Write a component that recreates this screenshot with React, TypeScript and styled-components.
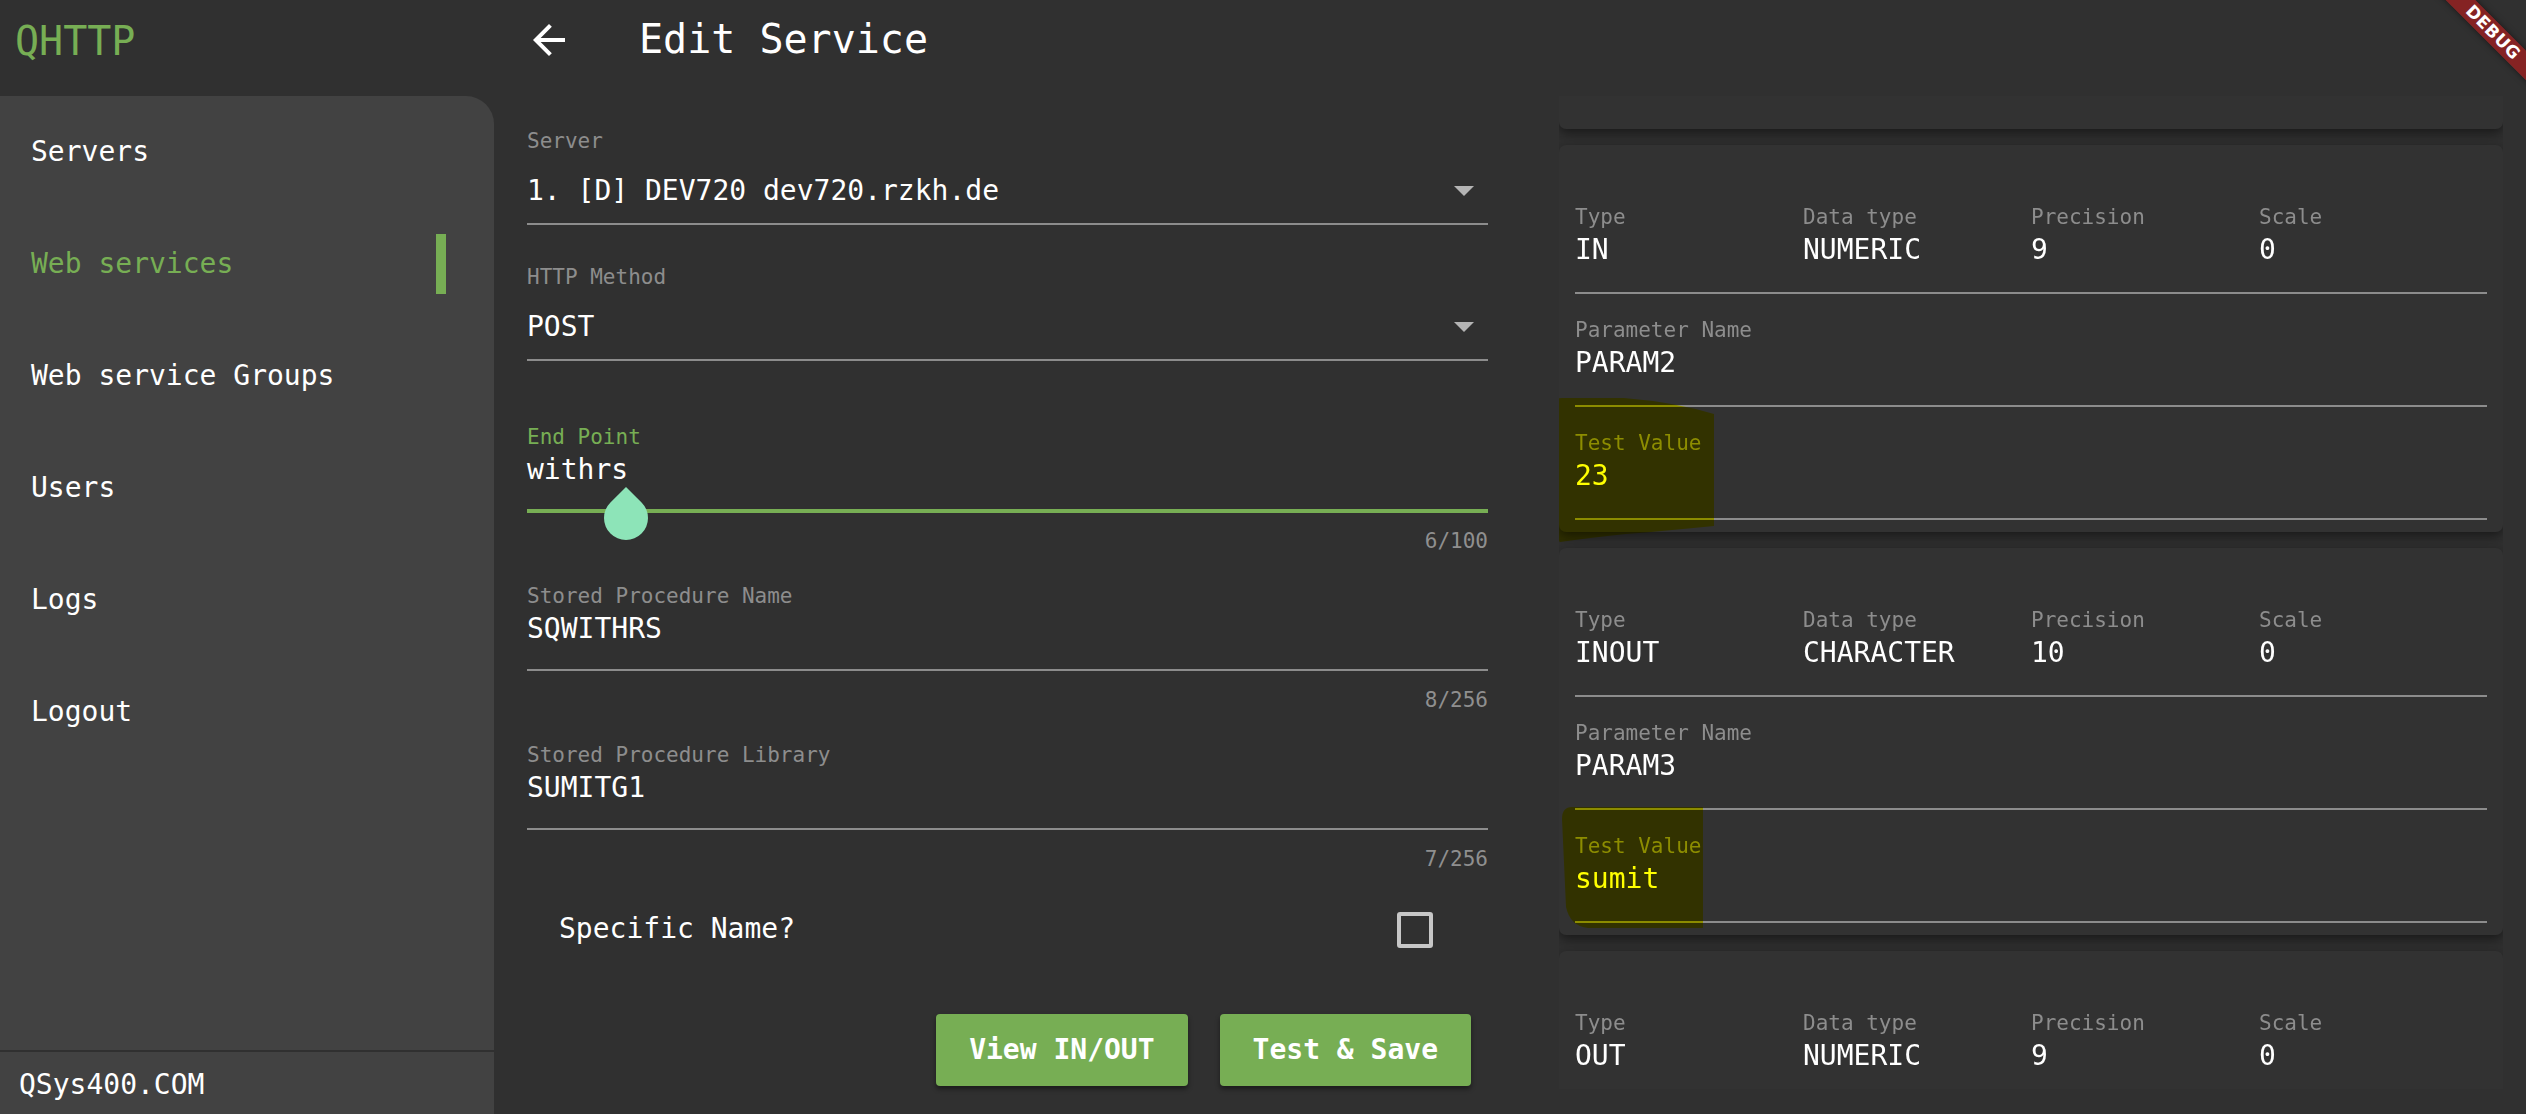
import React from "react";
import styled, { createGlobalStyle } from "styled-components";

const GREEN = "#77ae54";
const MUTED = "#8d8d8d";
const LINE = "#8c8c8c";

const GlobalStyle = createGlobalStyle`
  html, body { margin: 0; padding: 0; background: #303030; }
  body {
    font-family: "DejaVu Sans Mono", "Liberation Mono", monospace;
    color: #ffffff;
  }
  * { box-sizing: border-box; }
`;

const Root = styled.div`
  position: relative;
  display: flex;
  width: 100vw;
  height: 100vh;
  overflow: hidden;
  background: #303030;
`;

/* ---------- Sidebar ---------- */
const Sidebar = styled.aside`
  width: 494px;
  flex: none;
  display: flex;
  flex-direction: column;
`;

const SideHeader = styled.div`
  height: 96px;
  flex: none;
  padding: 17px 0 0 15px;
`;

const Brand = styled.div`
  font-size: 40px;
  line-height: 48px;
  color: ${GREEN};
`;

const SidePanel = styled.nav`
  flex: 1;
  display: flex;
  flex-direction: column;
  background: #424242;
  border-top-right-radius: 28px;
`;

const NavItem = styled.div<{ $active?: boolean }>`
  position: relative;
  height: 112px;
  flex: none;
  display: flex;
  align-items: center;
  padding-left: 31px;
  font-size: 28px;
  line-height: 32px;
  color: ${(p) => (p.$active ? GREEN : "#ffffff")};
`;

const ActiveBar = styled.span`
  position: absolute;
  right: 48px;
  top: 26px;
  width: 10px;
  height: 60px;
  background: ${GREEN};
`;

const Spacer = styled.div`
  flex: 1;
`;

const SideFooter = styled.div`
  height: 64px;
  flex: none;
  border-top: 2px solid #303030;
  padding: 17px 0 0 19px;
  font-size: 28px;
  line-height: 32px;
  color: #ffffff;
`;

/* ---------- Main ---------- */
const Main = styled.main`
  flex: 1;
  min-width: 0;
  display: flex;
  flex-direction: column;
`;

const AppBar = styled.header`
  height: 96px;
  flex: none;
  display: flex;
  align-items: flex-start;
  padding: 15px 0 0 39px;
`;

const BackIcon = styled.svg`
  margin-top: 9px;
  flex: none;
`;

const Title = styled.h1`
  margin: 0 0 0 74px;
  font-size: 40px;
  line-height: 48px;
  font-weight: 400;
  color: #ffffff;
`;

const Body = styled.div`
  flex: 1;
  min-height: 0;
  display: flex;
  gap: 71px;
  padding: 0 23px 0 33px;
`;

const FormColumn = styled.section`
  width: 961px;
  flex: none;
  display: flex;
  flex-direction: column;
  padding-top: 33px;
`;

const Field = styled.div<{ $mt?: number }>`
  position: relative;
  display: flex;
  flex-direction: column;
  margin-top: ${(p) => p.$mt ?? 0}px;
`;

const Label = styled.div<{ $accent?: boolean }>`
  font-size: 21px;
  line-height: 24px;
  color: ${(p) => (p.$accent ? GREEN : MUTED)};
  white-space: pre;
`;

const Value = styled.div<{ $mt?: number }>`
  margin-top: ${(p) => p.$mt ?? 5}px;
  font-size: 28px;
  line-height: 32px;
  color: #ffffff;
  white-space: pre;
`;

const DropRow = styled.div`
  margin-top: 22px;
  height: 32px;
  display: flex;
  align-items: center;
  justify-content: space-between;
  font-size: 28px;
  line-height: 32px;
  color: #ffffff;
  white-space: pre;
`;

const DropArrow = styled.svg`
  margin-right: 14px;
  flex: none;
`;

const Underline = styled.div<{ $mt: number; $focused?: boolean }>`
  margin-top: ${(p) => (p.$focused ? p.$mt - 1 : p.$mt)}px;
  margin-bottom: ${(p) => (p.$focused ? -1 : 0)}px;
  height: ${(p) => (p.$focused ? 4 : 2)}px;
  background: ${(p) => (p.$focused ? GREEN : LINE)};
`;

const Counter = styled.div`
  margin-top: 17px;
  align-self: flex-end;
  font-size: 21px;
  line-height: 24px;
  color: #8f8f8f;
`;

const Handle = styled.svg`
  position: absolute;
  left: 77px;
  top: 62px;
`;

const CheckRow = styled.div`
  margin-top: 22px;
  height: 72px;
  display: flex;
  align-items: center;
  justify-content: space-between;
  padding: 0 55px 0 32px;
  font-size: 28px;
  line-height: 32px;
  color: #ffffff;
`;

const CheckBox = styled.span`
  width: 36px;
  height: 36px;
  border: 4px solid #c6c6c6;
  border-radius: 3px;
  margin-top: 2px;
`;

const ButtonRow = styled.div`
  margin-top: 49px;
  display: flex;
  justify-content: flex-end;
  gap: 32px;
  padding-right: 17px;
`;

const ActionButton = styled.button`
  height: 72px;
  padding: 0 33px;
  border: none;
  border-radius: 4px;
  background: ${GREEN};
  color: #ffffff;
  font-family: "DejaVu Sans Mono", "Liberation Mono", monospace;
  font-size: 28px;
  line-height: 32px;
  font-weight: 700;
  box-shadow: 0 3px 5px rgba(0, 0, 0, 0.45);
  cursor: pointer;
`;

/* ---------- Parameter cards ---------- */
const ParamColumn = styled.section`
  width: 944px;
  flex: none;
  height: 993px;
  overflow: hidden;
  position: relative;
  isolation: isolate;
  background: #303030;
`;

const CardList = styled.div`
  display: flex;
  flex-direction: column;
  gap: 16px;
  margin-top: -87px;
`;

const ParamCard = styled.div`
  position: relative;
  display: flex;
  flex-direction: column;
  padding: 60px 16px 12px;
  background: #323232;
  border-radius: 7px;
  box-shadow: 0 4px 12px rgba(0, 0, 0, 0.5);
`;

const EmptyCard = styled(ParamCard)`
  height: 120px;
  padding: 0;
`;

const CardField = styled.div`
  display: flex;
  flex-direction: column;
  & + & {
    margin-top: 24px;
  }
`;

const CellGrid = styled.div`
  display: grid;
  grid-template-columns: repeat(4, 228px);
`;

const Cell = styled.div`
  display: flex;
  flex-direction: column;
`;

const Highlight = styled.svg`
  position: absolute;
  mix-blend-mode: multiply;
  pointer-events: none;
`;

/* ---------- Debug banner ---------- */
const DebugBanner = styled.div`
  position: absolute;
  top: 22px;
  right: -37px;
  width: 140px;
  height: 21px;
  transform: rotate(45deg);
  background: rgba(183, 28, 28, 0.63);
  box-shadow: 0 0 6px rgba(0, 0, 0, 0.5);
  color: #ffffff;
  font-family: "DejaVu Sans", "Liberation Sans", sans-serif;
  font-weight: 700;
  font-size: 17px;
  line-height: 21px;
  letter-spacing: 0.5px;
  text-align: center;
`;

type Param = {
  type: string;
  dataType: string;
  precision: string;
  scale: string;
  name?: string;
  test?: string;
};

const params: Param[] = [
  { type: "IN", dataType: "NUMERIC", precision: "9", scale: "0", name: "PARAM2", test: "23" },
  { type: "INOUT", dataType: "CHARACTER", precision: "10", scale: "0", name: "PARAM3", test: "sumit" },
  { type: "OUT", dataType: "NUMERIC", precision: "9", scale: "0" },
];

const blobs: Record<number, React.ReactNode> = {
  0: (
    <Highlight width="160" height="144" viewBox="0 0 160 144" style={{ left: -5, top: 253 }}>
      <path d="M0 6 Q0 0 8 0 L70 0 Q120 4 160 16 L160 128 Q110 133 72 136 Q34 140 6 144 L0 140 Z" fill="#ffff00" />
    </Highlight>
  ),
  1: (
    <Highlight width="141" height="121" viewBox="0 0 141 121" style={{ left: 3, top: 259 }}>
      <path d="M10 0 L141 0 L141 121 L26 121 Q8 119 4 100 L0 12 Q0 0 10 0 Z" fill="#ffff00" />
    </Highlight>
  ),
};

function ParamCardView({ p, index }: { p: Param; index: number }) {
  return (
    <ParamCard>
      <CardField>
        <CellGrid>
          <Cell>
            <Label>Type</Label>
            <Value>{p.type}</Value>
          </Cell>
          <Cell>
            <Label>Data type</Label>
            <Value>{p.dataType}</Value>
          </Cell>
          <Cell>
            <Label>Precision</Label>
            <Value>{p.precision}</Value>
          </Cell>
          <Cell>
            <Label>Scale</Label>
            <Value>{p.scale}</Value>
          </Cell>
        </CellGrid>
        <Underline $mt={26} />
      </CardField>
      {p.name !== undefined && (
        <CardField>
          <Label>Parameter Name</Label>
          <Value>{p.name}</Value>
          <Underline $mt={26} />
        </CardField>
      )}
      {p.test !== undefined && (
        <CardField>
          <Label>Test Value</Label>
          <Value>{p.test}</Value>
          <Underline $mt={26} />
        </CardField>
      )}
      {blobs[index]}
    </ParamCard>
  );
}

const navItems = ["Servers", "Web services", "Web service Groups", "Users", "Logs", "Logout"];

export default function App() {
  return (
    <>
      <GlobalStyle />
      <Root>
        <Sidebar>
          <SideHeader>
            <Brand>QHTTP</Brand>
          </SideHeader>
          <SidePanel>
            {navItems.map((n) => (
              <NavItem key={n} $active={n === "Web services"}>
                {n}
                {n === "Web services" && <ActiveBar />}
              </NavItem>
            ))}
            <Spacer />
            <SideFooter>QSys400.COM</SideFooter>
          </SidePanel>
        </Sidebar>

        <Main>
          <AppBar>
            <BackIcon width="32" height="32" viewBox="4 4 16 16">
              <path d="M20 11H7.83l5.59-5.59L12 4l-8 8 8 8 1.41-1.41L7.83 13H20v-2z" fill="#ffffff" />
            </BackIcon>
            <Title>Edit Service</Title>
          </AppBar>

          <Body>
            <FormColumn>
              <Field>
                <Label>Server</Label>
                <DropRow>
                  <span>1. [D] DEV720 dev720.rzkh.de</span>
                  <DropArrow width="20" height="10" viewBox="7 10 10 5">
                    <path d="M7 10l5 5 5-5z" fill="#b4b4b4" />
                  </DropArrow>
                </DropRow>
                <Underline $mt={16} />
              </Field>

              <Field $mt={40}>
                <Label>HTTP Method</Label>
                <DropRow>
                  <span>POST</span>
                  <DropArrow width="20" height="10" viewBox="7 10 10 5">
                    <path d="M7 10l5 5 5-5z" fill="#b4b4b4" />
                  </DropArrow>
                </DropRow>
                <Underline $mt={16} />
              </Field>

              <Field $mt={64}>
                <Label $accent>End Point</Label>
                <Value>withrs</Value>
                <Underline $mt={24} $focused />
                <Counter>6/100</Counter>
                <Handle width="44" height="53" viewBox="0 0 44 53">
                  <path d="M22 0 L37.56 15.44 A22 22 0 1 1 6.44 15.44 Z" fill="#8de4b8" />
                </Handle>
              </Field>

              <Field $mt={31}>
                <Label>Stored Procedure Name</Label>
                <Value>SQWITHRS</Value>
                <Underline $mt={24} />
                <Counter>8/256</Counter>
              </Field>

              <Field $mt={31}>
                <Label>Stored Procedure Library</Label>
                <Value>SUMITG1</Value>
                <Underline $mt={24} />
                <Counter>7/256</Counter>
              </Field>

              <CheckRow>
                <span>Specific Name?</span>
                <CheckBox />
              </CheckRow>

              <ButtonRow>
                <ActionButton>View IN/OUT</ActionButton>
                <ActionButton>Test &amp; Save</ActionButton>
              </ButtonRow>
            </FormColumn>

            <ParamColumn>
              <CardList>
                <EmptyCard />
                {params.map((p, i) => (
                  <ParamCardView key={p.type + i} p={p} index={i} />
                ))}
              </CardList>
            </ParamColumn>
          </Body>
        </Main>

        <DebugBanner>DEBUG</DebugBanner>
      </Root>
    </>
  );
}
